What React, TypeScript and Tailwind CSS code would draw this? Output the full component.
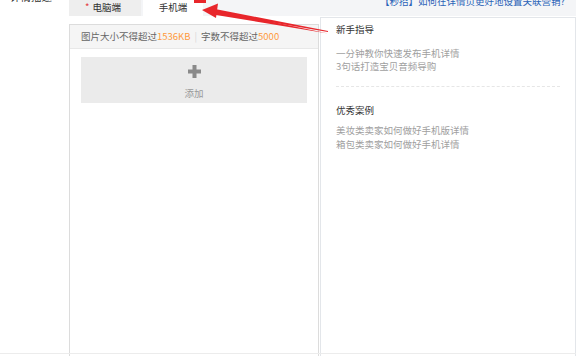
import React from "react";

const font = { fontFamily: '"Noto Sans CJK SC", "Noto Sans", sans-serif' };

function Arrow() {
  // red annotation arrow pointing at the mobile tab
  return (
    <svg
      className="absolute left-0 top-0 pointer-events-none"
      width="576"
      height="356"
      viewBox="0 0 576 356"
    >
      <rect x="194" y="-4" width="12" height="7" fill="#e8262b" />
      <polygon points="328,32 214,12.5 215,9 328,31" fill="#e8262b" />
      <polygon points="328,33.5 213,14.5 214,9.5" fill="#e8262b" />
      <polygon points="202,10 218,3.5 216,18" fill="#e8262b" />
    </svg>
  );
}

export default function App() {
  return (
    <div
      className="relative w-[576px] h-[356px] overflow-hidden bg-white text-[9.5px] leading-[13.5px]"
      style={font}
    >
      <div className="flex h-full">
        {/* label column */}
        <div className="w-[69px] shrink-0">
          <div className="-mt-[9px] pl-[10px] text-[10.5px] leading-[12px] text-[#333]">详情描述</div>
        </div>

        <div className="flex-1 flex flex-col">
          {/* tab bar */}
          <div className="flex h-[16px] bg-[#f4f5f7] shrink-0">
            <div className="w-[72px] bg-[#eeeeee] flex items-center pl-[16px] text-[#333]">
              <span className="text-[#e4393c] mr-[3px]">*</span>电脑端
            </div>
            <div className="w-[60px] ml-[2px] bg-white flex items-center justify-center text-[#333]">手机端</div>
            <div className="flex-1 flex justify-end pr-[11px]">
              <span className="-mt-[5px] text-[#2a63b8] leading-[12px]">【秒招】如何在详情页更好地设置关联营销?</span>
            </div>
          </div>

          <div className="flex flex-1 min-h-0">
            {/* editor panel */}
            <div className="w-[250px] shrink-0 mt-[8px] border border-[#dcdcdc] border-b-0 flex flex-col">
              <div className="h-[24px] bg-[#f5f5f5] border-b border-[#e8e8e8] flex items-center pl-[11px] text-[#666]">
                图片大小不得超过<span className="text-[#ff9a3c]">1536KB</span>
                <span className="mx-[4px] text-[#d8d8d8]">|</span>
                字数不得超过<span className="text-[#ff9a3c]">5000</span>
              </div>
              <div className="mx-[11px] mt-[8px] h-[46px] bg-[#ebebeb] flex flex-col items-center pt-[8px]">
                <svg width="13" height="13" viewBox="0 0 13 13">
                  <rect x="4.5" y="0" width="4" height="13" fill="#8a8a8a" />
                  <rect x="0" y="4.5" width="13" height="4" fill="#8a8a8a" />
                </svg>
                <div className="mt-[9px] text-[#999]">添加</div>
              </div>
            </div>

            {/* guide panel */}
            <div className="flex-1 ml-[1px] mt-[1px] border border-[#e3e6ea] border-b-0">
              <div className="px-[15px] pt-[5px]">
                <div className="text-[#333]">新手指导</div>
                <div className="mt-[10px] text-[#a0a0a0]">
                  <div>一分钟教你快速发布手机详情</div>
                  <div>3句话打造宝贝音频导购</div>
                </div>
                <div className="mt-[12px] border-t border-dashed border-[#e6e6e6]" />
                <div className="mt-[17px] text-[#333]">优秀案例</div>
                <div className="mt-[7px] text-[#a0a0a0]">
                  <div>美妆类卖家如何做好手机版详情</div>
                  <div>箱包类卖家如何做好手机详情</div>
                </div>
              </div>
            </div>
          </div>
        </div>
      </div>
      <div className="absolute left-0 right-0 bottom-[2px] border-t border-[#ececec]" />
      <Arrow />
    </div>
  );
}
